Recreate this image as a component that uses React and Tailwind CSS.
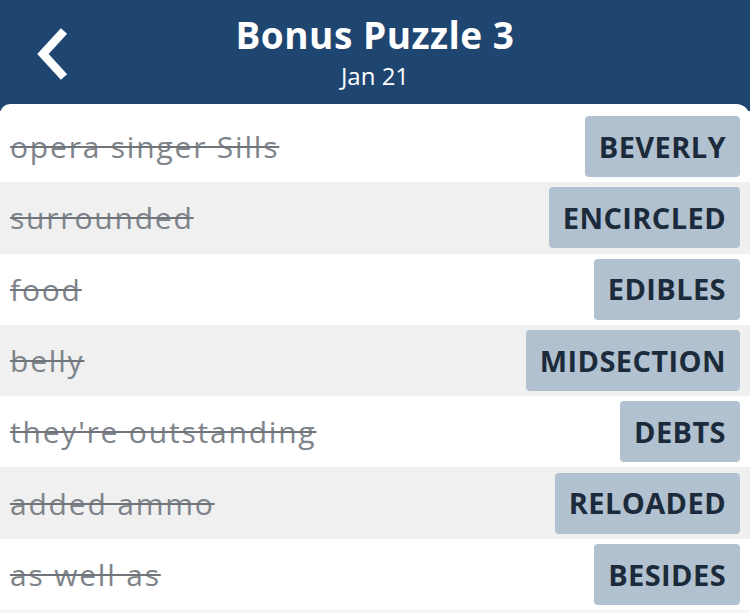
import React from "react";

const rows = [
  ["opera singer Sills", "BEVERLY"],
  ["surrounded", "ENCIRCLED"],
  ["food", "EDIBLES"],
  ["belly", "MIDSECTION"],
  ["they're outstanding", "DEBTS"],
  ["added ammo", "RELOADED"],
  ["as well as", "BESIDES"],
];

export default function App() {
  return (
    <div className="w-[750px] h-[613px] overflow-hidden bg-[#1f4571]" style={{ fontFamily: "'Open Sans', 'Noto Sans', sans-serif" }}>
      <div className="relative h-[104px] flex flex-col items-center text-white">
        <svg className="absolute left-[33px] top-[26px]" width="40" height="56" viewBox="0 0 40 56">
          <polyline points="31,5 10,28 31,51" fill="none" stroke="white" strokeWidth="8.5" strokeLinecap="butt" strokeLinejoin="miter" />
        </svg>
        <div className="mt-[10px] text-[37px] font-bold leading-[50px] tracking-[0.5px]">Bonus Puzzle 3</div>
        <div className="text-[24px] leading-[28px] mt-[2px]">Jan 21</div>
      </div>
      <div className="bg-white rounded-tl-[10px] rounded-tr-[14px] pt-[7px] h-[509px] flex flex-col">
        {rows.map(([clue, ans], i) => (
          <div key={i} className={`h-[71.3px] shrink-0 flex items-center justify-between pl-[10px] pr-[10px] ${i % 2 === 1 ? "bg-[#f0f0f0]" : "bg-white"}`}>
            <span className="text-[30px] tracking-[1.8px] text-[#7e848a] line-through decoration-[2px] decoration-[#6f757b]">{clue}</span>
            <span className="h-[61px] flex items-center px-[14px] bg-[#b1c1cf] rounded-[4px] text-[29px] font-bold tracking-[0.4px] text-[#1c2b3b]">{ans}</span>
          </div>
        ))}
        <div className="flex-1 bg-[#f6f6f6]" />
      </div>
    </div>
  );
}
